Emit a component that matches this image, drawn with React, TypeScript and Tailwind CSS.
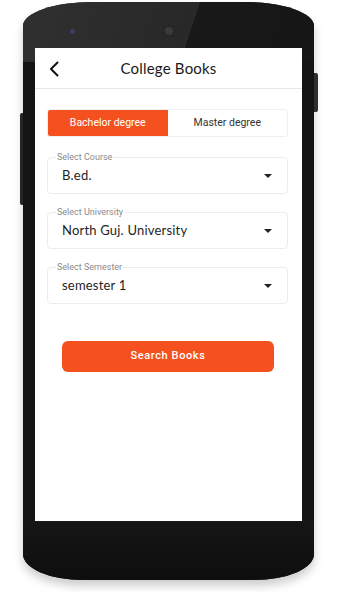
import React, { useState } from "react"

const fields = [
  { label: "Select Course", value: "B.ed." },
  { label: "Select University", value: "North Guj. University" },
  { label: "Select Semester", value: "semester 1" },
]

const Caret = () => (
  <svg width="8" height="4" viewBox="0 0 8 4" className="mr-[15px]">
    <path d="M0 0 L8 0 L4 4 Z" fill="#222" />
  </svg>
)

const SelectField = ({ label, value }: { label: string; value: string }) => (
  <div className="relative flex h-[37px] items-center justify-between rounded-[4px] border border-[#ececec]">
    <span className="absolute -top-[7px] left-[8px] bg-white px-[1px] text-[9px] leading-[12px] text-[#8a8a8a] font-['Roboto',sans-serif]">
      {label}
    </span>
    <span className="pl-[14px] pt-[1px] text-[13px] text-[#1e1e1e] font-['Lato',sans-serif] tracking-[0.2px]">
      {value}
    </span>
    <Caret />
  </div>
)

export default function App() {
  const [degree, setDegree] = useState("bachelor")

  return (
    <div className="relative h-[592px] w-[337px] overflow-hidden bg-white">
      {/* side buttons */}
      <div className="absolute left-[20px] top-[113px] h-[92px] w-[4px] rounded-l-[2px] bg-[#2a2a2a]" />
      <div className="absolute left-[313px] top-[73px] h-[39px] w-[5px] rounded-r-[2px] bg-[#333]" />

      <div className="flex pl-[23px] pt-[2px]">
        <div className="relative flex h-[578px] w-[291px] flex-col items-center rounded-[70px_70px_60px_60px/24px_24px_26px_26px] bg-[#141414] shadow-[0_6px_10px_rgba(0,0,0,0.2)]">
          {/* glossy top bezel */}
          <div className="pointer-events-none absolute inset-x-0 top-0 h-[60px] rounded-[70px_70px_0_0/24px_24px_0_0] bg-[linear-gradient(108deg,#303030_0%,#282828_57%,#181818_57%,#161616_100%)]" />
          <div className="pointer-events-none absolute inset-x-0 bottom-0 h-[60px] rounded-[0_0_60px_60px/0_0_26px_26px] bg-[linear-gradient(180deg,#161616_0%,#0e0e0e_100%)]" />

          {/* top bezel */}
          <div className="relative flex h-[46px] w-full items-center pt-[12px]">
            <div className="ml-[47px] h-[5px] w-[5px] rounded-full bg-[#3c3c66]" />
            <div className="ml-[88px] h-[12px] w-[12px] rounded-full bg-[#3a3a3a] shadow-[inset_0_0_3px_#000]" />
          </div>

          {/* screen */}
          <div className="relative flex h-[473px] w-[267px] flex-col bg-white">
            <div className="relative flex h-[41px] items-center justify-center border-b border-[#e6e6e6]">
              <svg width="10" height="16" viewBox="0 0 10 16" className="absolute left-[14px] top-[13px]">
                <path d="M8.5 1.5 L2 8 L8.5 14.5" stroke="#111" strokeWidth="2" fill="none" strokeLinecap="round" strokeLinejoin="round" />
              </svg>
              <span className="text-[15px] text-[#1a1a1a] font-['Lato',sans-serif] tracking-[0.2px]">College Books</span>
            </div>

            <div className="ml-[12px] mr-[14px] mt-[20px] flex h-[28px] overflow-hidden rounded-[3px] border border-[#efefef] font-['Roboto',sans-serif] text-[10.5px]">
              <button
                onClick={() => setDegree("bachelor")}
                className={
                  degree === "bachelor"
                    ? "flex w-1/2 items-center justify-center bg-[#f4511e] text-white"
                    : "flex w-1/2 items-center justify-center bg-white text-[#333]"
                }
              >
                Bachelor degree
              </button>
              <button
                onClick={() => setDegree("master")}
                className={
                  degree === "master"
                    ? "flex w-1/2 items-center justify-center bg-[#f4511e] text-white"
                    : "flex w-1/2 items-center justify-center bg-white text-[#333]"
                }
              >
                Master degree
              </button>
            </div>

            <div className="ml-[12px] mr-[14px] mt-[20px] flex flex-col gap-[18px]">
              {fields.map((f) => (
                <SelectField key={f.label} label={f.label} value={f.value} />
              ))}
            </div>

            <button className="ml-[27px] mr-[28px] mt-[37px] h-[31px] rounded-[6px] bg-[#f4511e] text-[11px] font-medium tracking-[0.6px] text-white font-['Roboto',sans-serif]">
              Search Books
            </button>
          </div>
        </div>
      </div>
    </div>
  )
}
